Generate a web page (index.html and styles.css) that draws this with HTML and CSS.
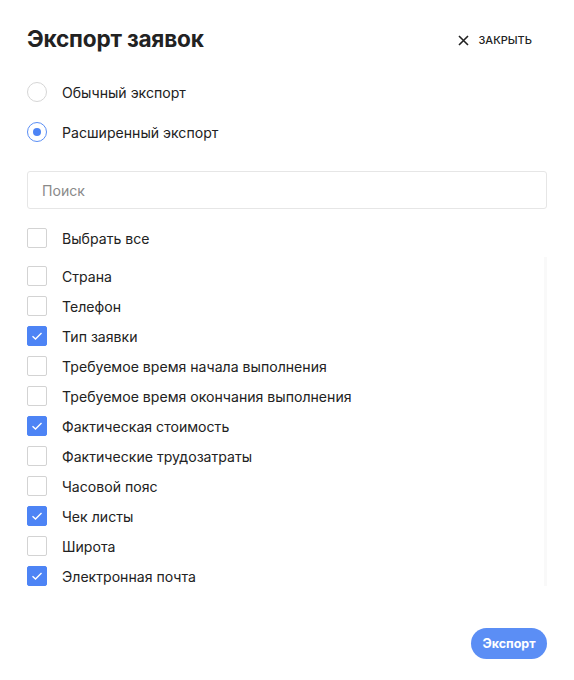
FILE: index.html
```html
<!DOCTYPE html>
<html lang="ru">
<head>
<meta charset="utf-8">
<link rel="stylesheet" href="styles.css">
</head>
<body>
<div class="modal">
  <div class="header">
    <h1 class="title">Экспорт заявок</h1>
    <button class="close">
      <svg width="11" height="11" viewBox="0 0 11 11"><path d="M1 1L10 10M10 1L1 10" stroke="#222" stroke-width="1.6" fill="none"/></svg>
      <span>ЗАКРЫТЬ</span>
    </button>
  </div>
  <div class="radios">
    <label class="radio-row"><span class="radio"></span><span class="label">Обычный экспорт</span></label>
    <label class="radio-row"><span class="radio checked"></span><span class="label">Расширенный экспорт</span></label>
  </div>
  <div class="search">Поиск</div>
  <div class="row select-all"><span class="cb"></span><span class="label">Выбрать все</span></div>
  <div class="list">
    <div class="items">
      <div class="row"><span class="cb"></span><span class="label">Страна</span></div>
      <div class="row"><span class="cb"></span><span class="label">Телефон</span></div>
      <div class="row"><span class="cb on"><svg width="12" height="10" viewBox="0 0 12 10"><path d="M1.5 5.2L4.5 8L10.5 2" stroke="#fff" stroke-width="1.4" fill="none"/></svg></span><span class="label">Тип заявки</span></div>
      <div class="row"><span class="cb"></span><span class="label">Требуемое время начала выполнения</span></div>
      <div class="row"><span class="cb"></span><span class="label">Требуемое время окончания выполнения</span></div>
      <div class="row"><span class="cb on"><svg width="12" height="10" viewBox="0 0 12 10"><path d="M1.5 5.2L4.5 8L10.5 2" stroke="#fff" stroke-width="1.4" fill="none"/></svg></span><span class="label">Фактическая стоимость</span></div>
      <div class="row"><span class="cb"></span><span class="label">Фактические трудозатраты</span></div>
      <div class="row"><span class="cb"></span><span class="label">Часовой пояс</span></div>
      <div class="row"><span class="cb on"><svg width="12" height="10" viewBox="0 0 12 10"><path d="M1.5 5.2L4.5 8L10.5 2" stroke="#fff" stroke-width="1.4" fill="none"/></svg></span><span class="label">Чек листы</span></div>
      <div class="row"><span class="cb"></span><span class="label">Широта</span></div>
      <div class="row"><span class="cb on"><svg width="12" height="10" viewBox="0 0 12 10"><path d="M1.5 5.2L4.5 8L10.5 2" stroke="#fff" stroke-width="1.4" fill="none"/></svg></span><span class="label">Электронная почта</span></div>
    </div>
    <div class="track"></div>
  </div>
  <div class="footer">
    <button class="export">Экспорт</button>
  </div>
</div>
</body>
</html>
```
FILE: styles.css
```css
* { box-sizing: border-box; }
html, body { margin: 0; padding: 0; background: #fff; }
body {
  font-family: "Inter", "Liberation Sans", sans-serif;
  color: #222;
}
.modal {
  width: 574px;
  height: 680px;
  padding: 24px 27px 0 27px;
}
.header {
  display: flex;
  justify-content: space-between;
  align-items: center;
  height: 32px;
}
.title {
  margin: 0 0 3px 0;
  font-size: 22.6px;
  font-weight: 700;
  letter-spacing: -0.2px;
  color: #222;
}
.close {
  display: flex;
  align-items: center;
  gap: 9px;
  border: 0;
  background: none;
  padding: 0;
  margin-right: 15px;
  font-family: inherit;
  font-size: 11px;
  font-weight: 500;
  color: #222;
}
.radios {
  margin-top: 16px;
}
.radio-row {
  display: flex;
  align-items: center;
  height: 40px;
}
.radio {
  width: 20px;
  height: 20px;
  border-radius: 50%;
  border: 1px solid #d6d6d6;
  display: flex;
  align-items: center;
  justify-content: center;
  flex: none;
}
.radio.checked { border-color: #5a8ef5; }
.radio.checked::after {
  content: "";
  width: 8px;
  height: 8px;
  border-radius: 50%;
  background: #4d84f5;
}
.label {
  margin-left: 15px;
  font-size: 14.1px;
  color: #222;
}
.search {
  margin-top: 19px;
  height: 38px;
  border: 1px solid #e6e6e6;
  border-radius: 3px;
  padding-left: 14px;
  display: flex;
  align-items: center;
  font-size: 14.1px;
  color: #8a8a8a;
}
.row {
  display: flex;
  align-items: center;
  height: 30px;
}
.select-all {
  margin-top: 14px;
}
.cb {
  width: 20px;
  height: 20px;
  border: 1px solid #d3d3d3;
  border-radius: 2px;
  flex: none;
  display: flex;
  align-items: center;
  justify-content: center;
}
.cb.on {
  background: #4d84f5;
  border-color: #4d84f5;
}
.list {
  margin-top: 4px;
  display: flex;
  height: 330px;
}
.items {
  flex: 1;
  padding-top: 4px;
}
.track {
  width: 3px;
  height: 329px;
  background: #f9f9f9;
}
.footer {
  display: flex;
  justify-content: flex-end;
  margin-top: 41px;
}
.export {
  width: 76px;
  height: 31px;
  border: 0;
  border-radius: 16px;
  background: #5b8ef5;
  color: #fff;
  font-family: inherit;
  font-size: 12.5px;
  font-weight: 700;
}
```
